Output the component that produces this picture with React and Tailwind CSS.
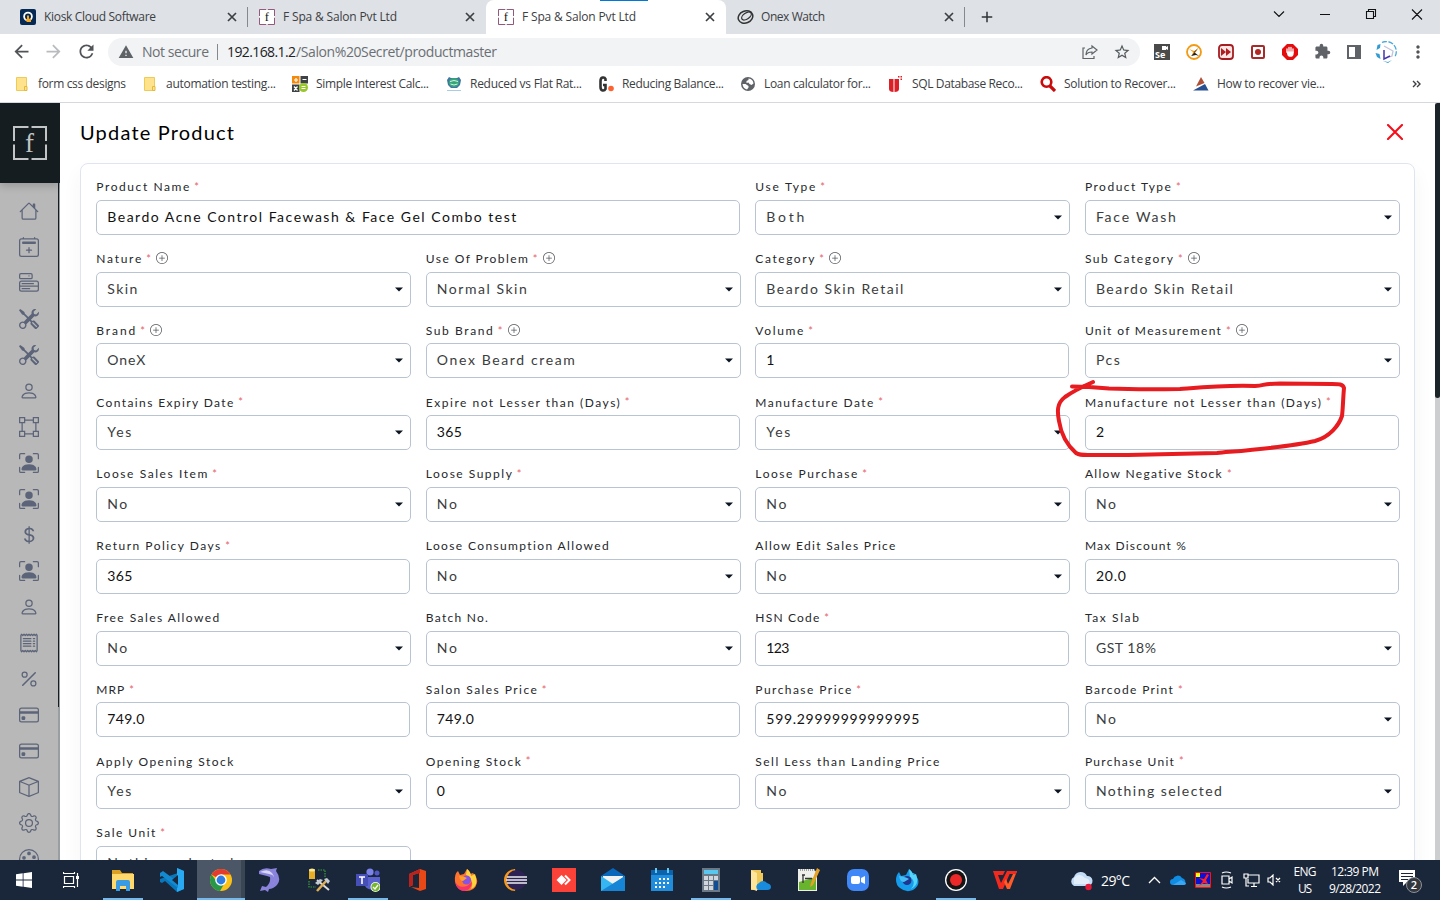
import React, { useLayoutEffect, useRef, useState } from "react";
import {
  BsHouse, BsCalendar2Plus, BsMenuButton, BsTools, BsPerson, BsBoundingBox, BsPersonBoundingBox,
  BsCurrencyDollar, BsReceipt, BsPercent, BsCreditCard, BsBox, BsGear, BsPalette, BsPlusCircle,
} from "react-icons/bs";
import { MdArrowBack, MdArrowForward, MdRefresh, MdWarning, MdStarBorder, MdExtension, MdMoreVert, MdAdd } from "react-icons/md";

// Text that spreads its letters to fill a given width.
function Fit({ w, className = "", children }) {
  const ref = useRef(null);
  const [ls, setLs] = useState(0);
  const text = String(children);
  useLayoutEffect(() => {
    const measure = () => {
      if (!w || text.length < 2 || !ref.current) return;
      const el = ref.current;
      el.style.letterSpacing = "0px";
      const value = (w - el.getBoundingClientRect().width) / (text.length - 1);
      el.style.letterSpacing = value + "px";
      setLs(value);
    };
    measure();
    if (document.fonts && document.fonts.ready) document.fonts.ready.then(measure);
  }, [w, text]);
  return (
    <span className={"block shrink-0 whitespace-nowrap " + className} style={w ? { width: w } : undefined}>
      <span ref={ref} className="inline-block whitespace-nowrap" style={{ letterSpacing: ls }}>{text}</span>
    </span>
  );
}

function FramedF({ size, frame, letter, fill }) {
  return (
    <svg width={size} height={size} viewBox="0 0 34 34">
      <rect width="34" height="34" fill={fill} />
      <path d="M1 15V1H15.500M18.500 1H33V15M33 18.500V33H18.500M15.500 33H1V18.500" fill="none" stroke={frame} strokeWidth="2" />
      <text x="16.500" y="26" textAnchor="middle" fontFamily="Liberation Serif, serif" fontSize="27" fill={letter}>f</text>
    </svg>
  );
}

const SmallF = () => <FramedF size={16} frame="#8a4a70" letter="#111" fill="#fff" />;

const KioskIcon = () => (
  <svg width="16" height="16" viewBox="0 0 16 16">
    <rect width="16" height="16" rx="2" fill="#062a54" />
    <circle cx="8" cy="7.500" r="3.900" fill="none" stroke="#fff" strokeWidth="1.800" />
    <path d="M7 6.500h2v3l2 .8v2.700H6.800L5.500 10.500 7 10z" fill="#f7a823" />
  </svg>
);

const OnexIcon = () => (
  <svg width="18" height="16" viewBox="0 0 18 16" fill="none" stroke="#333">
    <ellipse cx="8.500" cy="8" rx="7.500" ry="6" transform="rotate(-22 8.500 8)" strokeWidth="1.500" />
    <ellipse cx="9.500" cy="7" rx="5.500" ry="3" transform="rotate(-35 9.500 7)" strokeWidth="1.300" />
  </svg>
);

function Tab({ icon, title, w, active, divider, width, gap }) {
  return (
    <div className={"flex h-[34px] shrink-0 items-center pr-[11px] " + width + (active ? " rounded-t-lg bg-white pl-[12px]" : gap)}>
      <div className="flex w-6 shrink-0 items-center">{icon}</div>
      <Fit w={w} className="text-[12px] text-[#3c4043]">{title}</Fit>
      <svg className="ml-auto shrink-0" width="10" height="10" viewBox="0 0 10 10" stroke="#3c4043" strokeWidth="1.700"><path d="M1 1l8 8M9 1L1 9" /></svg>
      {divider && <div className="-mr-[11px] ml-[10px] h-5 w-px shrink-0 bg-[#85888c]" />}
    </div>
  );
}

function TabStrip() {
  return (
    <div className="flex h-[34px] bg-[#dee1e6]">
      <Tab width="w-[248px]" gap=" pl-5" icon={<KioskIcon />} title="Kiosk Cloud Software" w={112} divider />
      <Tab width="w-[238px]" gap=" pl-[11px]" icon={<SmallF />} title="F Spa & Salon Pvt Ltd" w={114} />
      <Tab width="w-[240px]" gap="" icon={<SmallF />} title="F Spa & Salon Pvt Ltd" w={114} active />
      <Tab width="w-[239px]" gap=" pl-[11px]" icon={<OnexIcon />} title="Onex Watch" w={64} divider />
      <MdAdd className="mt-2 ml-[13px] shrink-0 text-[#303336]" size={18} />
      <svg className="ml-auto mt-[6px] shrink-0" width="174" height="18" viewBox="0 0 174 18" fill="none" stroke="#111" strokeWidth="1.100">
        <path d="M8 5.500l5 5 5-5M54 8.500h10M100.500 5.500h7v7h-7zM102.500 5.500v-2h7v7h-2M146 3.500l10 10M156 3.500l-10 10" />
      </svg>
    </div>
  );
}

function Toolbar() {
  return (
    <div className="flex h-[35px] items-center bg-white pl-[11px]">
      <MdArrowBack size={21} className="text-[#505357]" />
      <MdArrowForward size={21} className="ml-[11px] text-[#b9bbbe]" />
      <MdRefresh size={21} className="ml-[12px] text-[#505357]" />
      <div className="ml-[11px] flex h-7 w-[1032px] items-center rounded-full bg-[#f1f3f4] pl-[10px] pr-[9px]">
        <MdWarning size={16} className="text-[#5f6368]" />
        <Fit w={67} className="ml-2 text-[14px] text-[#6b6f74]">Not secure</Fit>
        <div className="ml-2 h-4 w-px bg-[#85888c]" />
        <Fit w={69} className="ml-[9px] text-[14px] text-[#202124]">192.168.1.2</Fit>
        <Fit w={201} className="text-[14px] text-[#6b6f74]">/Salon%20Secret/productmaster</Fit>
        <svg className="ml-auto" width="16" height="16" viewBox="0 0 16 16" fill="none" stroke="#5f6368" strokeWidth="1.200">
          <path d="M3 4H1v10.500h11V12M10 2l5 4-5 4V8C7 8 5 9 4 11c0-4 2-6.500 6-7z" />
        </svg>
        <MdStarBorder size={18} className="ml-[15px] text-[#55595e]" />
      </div>
      <div className="ml-[14px] flex h-4 items-center gap-4">
        <svg width="16" height="16" viewBox="0 0 16 16">
          <rect width="16" height="16" fill="#4a4a4a" />
          <path d="M8 2h4v1l2-1v4l-2-1v1H8z" fill="#fff" />
          <text x="1" y="14" fontFamily="Open Sans, sans-serif" fontSize="9" fontWeight="700" fill="#fff">Se</text>
        </svg>
        <svg width="16" height="16" viewBox="0 0 16 16">
          <circle cx="8" cy="8" r="7" fill="#fff" stroke="#f39a12" strokeWidth="1.800" />
          <path d="M3 5l5 2 4-2-3 4-3 3 1-4z" fill="#f39a12" /><path d="M13 3L8 8l5 4-3-1-5 1 4-4z" fill="#222" />
        </svg>
        <svg width="16" height="16" viewBox="0 0 16 16">
          <rect x="1" y="1" width="14" height="14" rx="3" fill="#fbe6e6" stroke="#a51d20" strokeWidth="1.800" />
          <path d="M3 4l5 4-5 4zM8 4l5 4-5 4z" fill="#b01e22" />
        </svg>
        <svg width="16" height="16" viewBox="0 0 16 16">
          <rect x="2" y="2" width="12" height="12" rx="1" fill="#fff" stroke="#a82a28" strokeWidth="2" />
          <circle cx="8" cy="8" r="3" fill="#b32622" />
        </svg>
        <svg width="16" height="16" viewBox="0 0 16 16">
          <path d="M5 0h6l5 5v6l-5 5H5l-5-5V5z" fill="#e40d0d" />
          <path d="M5 8V5M7 8V3.500M9 8V3.500M11 8.500V5" stroke="#fff" strokeWidth="1.300" strokeLinecap="round" />
          <path d="M4.400 7.500h7.200V10c0 3.500-5 3.500-6 1.500z" fill="#fff" />
        </svg>
        <MdExtension size={17} className="-mr-px text-[#5f6368]" />
        <svg width="16" height="16" viewBox="0 0 16 16"><path d="M1 1h14v14H1zM3 3v10h6V3z" fill="#5f6368" fillRule="evenodd" /></svg>
        <svg className="-ml-[3px]" width="22" height="22" viewBox="0 0 22 22" fill="none">
          <path d="M7 1.500a10 10 0 0 1 13 14" stroke="#49a8dc" strokeWidth="1.300" strokeDasharray="5 1.500" />
          <path d="M2.500 4l3-1-.5 4-3.500 2zM.5 12l4 1 1 5-3.500-2zM8 20l5 1 4-2-4 3z" fill="#319bd4" />
          <path d="M9 5l9 5-1 5-3 1" stroke="#c3c4dd" strokeWidth="1.300" /><path d="M9 9v9l6-3" stroke="#4637ac" strokeWidth="1.500" />
        </svg>
      </div>
      <MdMoreVert size={20} className="ml-[11px] shrink-0 text-[#505357]" />
    </div>
  );
}

const Folder = () => (
  <svg width="16" height="16" viewBox="0 0 16 16">
    <path d="M2.500 1.500h10v13h-10z" fill="#ffe38c" stroke="#edcb58" /><path d="M10.500 10.500h2.500v4h-2.500z" fill="#ffe38c" stroke="#e3ba3e" />
  </svg>
);

const BOOKMARKS = [
  { t: "form css designs", w: 88, cls: "w-[128px]", icon: <Folder /> },
  { t: "automation testing...", w: 110, cls: "w-[150px]", icon: <Folder /> },
  { t: "Simple Interest Calc...", w: 113, cls: "w-[154px]", icon: (
    <svg width="16" height="16" viewBox="0 0 16 16"><path d="M0 0h7.500v7.500H0z" fill="#f48a0b" /><path d="M8.500 0H16v7.500H8.500zM0 8.500h7.500V16H0z" fill="#3f4244" /><circle cx="11.500" cy="11.500" r="4.500" fill="#98c72b" /><path d="M2 4h4M4 2v4M10.500 3.500h4M2 10.500l3.500 4M5.500 10.500L2 14.500M9.500 10.500h4M9.500 12.500h4" stroke="#fff" strokeWidth="1.200" /></svg>) },
  { t: "Reduced vs Flat Rat...", w: 112, cls: "w-[152px]", icon: (
    <svg width="16" height="16" viewBox="0 0 16 16"><path d="M1 4l2-3 2 1h6l2-1 2 3-1 5-3 3H5L2 9z" fill="#4173a6" /><ellipse cx="8" cy="6.500" rx="5.200" ry="4.500" fill="#36a678" /><path d="M4 5.500q4-2 8 0M4.500 8q3.500 2 7 0" fill="none" stroke="#d6f2e3" /><path d="M1 14.500h14" stroke="#a6cde6" /></svg>) },
  { t: "Reducing Balance...", w: 102, cls: "w-[142px]", icon: (
    <svg width="17" height="16" viewBox="0 0 17 16"><path d="M7.500 5V3C6.500.7 2.500.8 2.500 5v6c0 4.500 4 4 5 2V9H5" fill="none" stroke="#333" strokeWidth="2.600" /><circle cx="13" cy="12.500" r="2.800" fill="#ff6231" /></svg>) },
  { t: "Loan calculator for...", w: 107, cls: "w-[148px]", icon: (
    <svg width="16" height="16" viewBox="0 0 16 16"><circle cx="8" cy="8" r="7" fill="#5f6368" /><path d="M8.500 2.500q4.500.5 5 5l-2 1.500-2-1-1-1.500-2 .5V5l2-1zM2.500 8h3l3 2v1.500L7 13.500q-4-1-4.500-5.500z" fill="#fff" /></svg>) },
  { t: "SQL Database Reco...", w: 111, cls: "w-[152px]", icon: (
    <svg width="16" height="16" viewBox="0 0 16 16" fill="#dd2028"><path d="M1 3h4.500v13Q1 16 1 13zM6.500 3H11v10q0 3-4.500 3zM10 0h1.500v1.500H10zM12.500 0H14v1.500h-1.500zM12.500 2.500H14V4h-1.500z" /></svg>) },
  { t: "Solution to Recover...", w: 112, cls: "w-[153px]", icon: (
    <svg width="16" height="16" viewBox="0 0 16 16" fill="none" stroke="#c90b0b"><circle cx="6.500" cy="6" r="4.800" strokeWidth="2.600" /><path d="M10 10l5 5" strokeWidth="3.200" /></svg>) },
  { t: "How to recover vie...", w: 108, cls: "w-[150px]", icon: (
    <svg width="16" height="16" viewBox="0 0 16 16"><path d="M8 1l3.500 6L3 10.500z" fill="#ae5037" /><path d="M0 14.500l12-6.500 3.500 6.500z" fill="#284f8f" /></svg>) },
];

function Bookmarks() {
  return (
    <div className="flex h-[34px] items-center border-b border-[#d5d8dc] bg-white pb-[3px] pl-[14px]">
      {BOOKMARKS.map((b) => (
        <div key={b.t} className={"flex shrink-0 items-center " + b.cls}>
          <div className="flex w-6 shrink-0">{b.icon}</div>
          <Fit w={b.w} className="text-[12px] text-[#3c4043]">{b.t}</Fit>
        </div>
      ))}
      <svg className="ml-[69px]" width="10" height="8" viewBox="0 0 10 8" fill="none" stroke="#3c4043" strokeWidth="1.400"><path d="M1 1l3 3-3 3M5 1l3 3-3 3" /></svg>
    </div>
  );
}

const SIDE = [BsHouse, BsCalendar2Plus, BsMenuButton, BsTools, BsTools, BsPerson, BsBoundingBox, BsPersonBoundingBox,
  BsPersonBoundingBox, BsCurrencyDollar, BsPersonBoundingBox, BsPerson, BsReceipt, BsPercent, BsCreditCard, BsCreditCard, BsBox, BsGear, BsPalette];

function Sidebar() {
  return (
    <div className="flex w-[60px] shrink-0 flex-col overflow-hidden bg-[#b8b8b8]">
      <div className="z-10 flex h-20 shrink-0 items-center justify-center bg-[#161d20] shadow-[0_3px_8px_rgba(0,0,0,0.18)]">
        <FramedF size={34} frame="#c2c4c5" letter="#c2c4c5" fill="#161d20" />
      </div>
      <div className="flex min-h-0 flex-1">
        <div className="flex w-[58px] flex-col items-center pt-[10px]">
          {SIDE.map((Icon, i) => (
            <div key={i} className="flex h-9 shrink-0 items-center justify-center text-[#5c6479]"><Icon size={20} /></div>
          ))}
        </div>
        <div className="w-[2px] bg-[#999ea2]"><div className="h-[524px] w-px bg-[#161d20]" /></div>
      </div>
    </div>
  );
}

const S = "select";
const I = "input";
const FIELDS = [
  ["Product Name", 93, "*", I, "Beardo Acne Control Facewash & Face Gel Combo test", 409, "wide"],
  ["Use Type", 60, "*", S, "Both", 38],
  ["Product Type", 86, "*", S, "Face Wash", 80],
  ["Nature", 45, "*+", S, "Skin", 30],
  ["Use Of Problem", 102, "*+", S, "Normal Skin", 90],
  ["Category", 59, "*+", S, "Beardo Skin Retail", 137],
  ["Sub Category", 88, "*+", S, "Beardo Skin Retail", 137],
  ["Brand", 39, "*+", S, "OneX", 38],
  ["Sub Brand", 67, "*+", S, "Onex Beard cream", 138],
  ["Volume", 48, "*", I, "1", 0],
  ["Unit of Measurement", 136, "*+", S, "Pcs", 24],
  ["Contains Expiry Date", 137, "*", S, "Yes", 24],
  ["Expire not Lesser than (Days)", 194, "*", I, "365", 25],
  ["Manufacture Date", 118, "*", S, "Yes", 24],
  ["Manufacture not Lesser than (Days)", 236, "*", I, "2", 0],
  ["Loose Sales Item", 111, "*", S, "No", 20],
  ["Loose Supply", 86, "*", S, "No", 20],
  ["Loose Purchase", 102, "*", S, "No", 20],
  ["Allow Negative Stock", 137, "*", S, "No", 20],
  ["Return Policy Days", 124, "*", I, "365", 25],
  ["Loose Consumption Allowed", 183, "", S, "No", 20],
  ["Allow Edit Sales Price", 140, "", S, "No", 20],
  ["Max Discount %", 101, "", I, "20.0", 30],
  ["Free Sales Allowed", 123, "", S, "No", 20],
  ["Batch No.", 62, "", S, "No", 20],
  ["HSN Code", 64, "*", I, "123", 23],
  ["Tax Slab", 54, "", S, "GST 18%", 60],
  ["MRP", 28, "*", I, "749.0", 37],
  ["Salon Sales Price", 111, "*", I, "749.0", 37],
  ["Purchase Price", 96, "*", I, "599.29999999999995", 153],
  ["Barcode Print", 88, "*", S, "No", 20],
  ["Apply Opening Stock", 137, "", S, "Yes", 24],
  ["Opening Stock", 95, "*", I, "0", 0],
  ["Sell Less than Landing Price", 184, "", S, "No", 20],
  ["Purchase Unit", 89, "*", S, "Nothing selected", 126],
  ["Sale Unit", 59, "*", S, "Nothing selected", 126],
];

function Field({ label, lw, marks, kind, value, vw, wide }) {
  return (
    <div className={"h-[71.8px] " + (wide ? "col-span-2" : "")}>
      <div className="flex h-[22px] items-center pb-[3px]">
        <Fit w={lw} className="text-[12px] text-[#26282c]">{label}</Fit>
        {marks.includes("*") && <span className="ml-[5px] text-[11px] text-[#e8606b]">*</span>}
        {marks.includes("+") && <BsPlusCircle size={12} className="-mt-[2px] ml-[5px] text-[#55585c]" />}
      </div>
      <div className={"flex h-[35px] items-center justify-between rounded-[5px] border border-[#b9c4d2] bg-white pl-[10px] pr-[7px] text-[14px] " + (kind === I ? "mr-px text-[#111]" : "text-[#3b3d40]")}>
        <Fit w={vw} className="pb-[2px]">{value}</Fit>
        {kind === S && <svg width="8" height="5" viewBox="0 0 8 5"><path d="M0 .5h8L4 4.500z" fill="#0b1420" /></svg>}
      </div>
    </div>
  );
}

function ProductPanel() {
  return (
    <div className="min-w-0 flex-1 overflow-hidden bg-white pl-5 pr-5 font-['Lato',sans-serif]">
      <div className="flex h-[60px] items-center justify-between pb-[2px] pr-3">
        <Fit w={154} className="text-[20px] text-black">Update Product</Fit>
        <svg width="16" height="16" viewBox="0 0 16 16" stroke="#f80d1b" strokeWidth="2.100" strokeLinecap="round"><path d="M1 1l14 14M15 1L1 15" /></svg>
      </div>
      <div className="grid h-[760px] grid-cols-4 content-start gap-x-[14.53px] rounded-lg border border-[#dfe5f0] pl-[15.3px] pr-[14.1px] pt-[13.8px] shadow-[0_10px_20px_rgba(60,60,90,0.05)]">
        {FIELDS.map(([label, lw, marks, kind, value, vw, wide]) => (
          <Field key={label} label={label} lw={lw} marks={marks} kind={kind} value={value} vw={vw} wide={wide} />
        ))}
      </div>
    </div>
  );
}

const svg = (children) => <svg width="24" height="24" viewBox="0 0 24 24">{children}</svg>;

const TASKS = [
  { icon: svg(<><path d="M1 2h8l2 3h11v16H1z" fill="#dba124" /><path d="M1 6h22v15H1z" fill="#ffd96b" /><path d="M5 23v-9q0-2 2-2h10q2 0 2 2v9h-4v-5H9v5z" fill="#399be3" /></>), line: "w-10" },
  { icon: svg(<><path d="M17 0l7 3v18l-7 3L5 13l-3 2-2-1V11l18-6z" fill="#0877bb" /><path d="M17 0l7 3v18l-7 3z" fill="#28a9f2" /><path d="M0 9l2-1 16 12v-6L3 3 0 5z" fill="#1389d1" /><path d="M18 7v10l-6-5z" fill="#1a2639" /></>) },
  { icon: svg(<><circle cx="12" cy="12" r="11" fill="#fbc116" /><path d="M12 12L2.500 6.500A11 11 0 0 1 21.500 6.500H12z" fill="#e33b2e" /><path d="M2.500 6.500A11 11 0 0 0 11 23l5-8.500-4-2.500-4 2z" fill="#279847" /><circle cx="12" cy="12" r="5.800" fill="#fff" /><circle cx="12" cy="12" r="4.400" fill="#2f7de1" /></>), active: true, line: "w-12" },
  { icon: svg(<><path d="M1 3Q6-1 13 1l6-1-1 3q6 8 1 14-4 4-8 4l-1 3-3-2-5 1 2-5 4 1q5-4 4-10L9 8 1 6z" fill="#8983dc" /><path d="M2 4q8-4 12 1 4 5 1 12 4-10-4-11z" fill="#d8d6f5" /></>) },
  { icon: svg(<><path d="M2 2h6v9H2z" fill="#e7af26" /><ellipse cx="5" cy="2" rx="3" ry="1.500" fill="#fce894" /><path d="M11 2h7v7M2 13v6h7" fill="none" stroke="#39a03b" strokeWidth="1.200" strokeDasharray="1.500 1" /><path d="M10 12l12 10" stroke="#ddd" strokeWidth="2" /><path d="M20 12L10 23" stroke="#ddad53" strokeWidth="2.500" /><path d="M8 15l5-4 3 1-5 5zM17 11l3-1 3 3-2 3z" fill="#c4cbd2" /></>) },
  { icon: svg(<><circle cx="14" cy="4" r="3.600" fill="#7b83eb" /><circle cx="21" cy="5" r="2.500" fill="#5059c9" /><path d="M9 9h15v8q0 5-5 5-8 0-10-4z" fill="#5962ce" /><path d="M0 6h12v12H0z" fill="#464eb8" /><path d="M3 9h6M6 9v7" stroke="#fff" strokeWidth="1.600" /><circle cx="19.500" cy="19" r="5" fill="#fff" /><circle cx="19.500" cy="19" r="4.200" fill="#76b82a" /><path d="M17 19l2 2 3-4" fill="none" stroke="#fff" strokeWidth="1.300" /></>), line: "w-10" },
  { icon: svg(<><path d="M15 1l6 2v18l-6 2-9-4 8 1V5L8 7v10l-4 2V6z" fill="#e74816" /><path d="M15 1L4 6v13l4-2V7l7-2z" fill="#bc221d" /></>) },
  { icon: svg(<><path d="M1 14Q0 6 4 3l2 4 4-1 3-5q3 2 3 5l3-1q5 5 4 10-2 8-11 8T1 14z" fill="#ff732f" /><path d="M13 1q4 3 4 7l4-2q4 12-4 15 4-9-5-14z" fill="#ffd43c" /><path d="M1 13q3 8 12 5l5-4q-1 9-9 9-7-2-8-10z" fill="#f8326a" /><circle cx="12.500" cy="12" r="4.500" fill="#8653e5" /><path d="M5 8q5 0 8 2l-4 3q-3 0-4-5z" fill="#ff9e2b" /></>) },
  { icon: svg(<><path d="M12 2A10 10 0 0 0 12 22 11 11 0 0 1 12 2z" fill="#f6991c" stroke="#f6991c" strokeWidth="2" /><circle cx="13.500" cy="12" r="10" fill="#2e2255" /><path d="M4 9h20M3 12h21M4 15h20" stroke="#eee" strokeWidth="1.600" /></>) },
  { icon: svg(<><path d="M0 0h24v24H0z" fill="#fb4238" /><path d="M9.500 7l5 5-5 5-5-5z" fill="#fff" /><path d="M13 7.500l4.500 4.500-4.500 4.500" fill="none" stroke="#fff" strokeWidth="2" /></>) },
  { icon: svg(<><path d="M0 8l12-8 12 8v15H0z" fill="#0867bb" /><path d="M2 8h20v10H2z" fill="#f1f1f1" /><path d="M0 8l12 8 12-8v15H0z" fill="#35b5f2" /><path d="M0 23L24 8v15z" fill="#1685d6" /></>) },
  { icon: svg(<><path d="M1 2h22v21H1z" fill="#208cdc" /><path d="M1 2h22v5H1z" fill="#0c63ab" /><path d="M6 0v5M18 0v5" stroke="#61c8f3" strokeWidth="2" /><path d="M9 11h11M5 15h15M5 19h11" stroke="#fff" strokeWidth="2" strokeDasharray="2 2" /></>) },
  { icon: svg(<><path d="M3 0h18v24H3z" fill="#6b7886" /><path d="M5 2h14v4H5z" fill="#58c8ee" /><path d="M5 8h4v4H5zM10 8h4v4h-4zM15 8h4v4h-4zM5 13h4v4H5zM10 13h4v4h-4zM5 18h4v4H5zM10 18h4v4h-4z" fill="#d0d6dc" /><path d="M15 13h4v9h-4z" fill="#124c92" /></>), line: "w-10" },
  { icon: svg(<><path d="M3 2h10v3h2v17H3z" fill="#f0c85a" /><path d="M3 2l6 3v18l-6-2z" fill="#ffe49b" /><path d="M10 22a4 4 0 0 1 1-7 5 5 0 0 1 8 0q4 1 4 4t-4 3z" fill="#198bdc" /></>) },
  { icon: svg(<><path d="M1 1h16l3 4v18H1z" fill="#eeeeea" /><path d="M2 14l17-5v13H2z" fill="#68b42d" /><path d="M3 2h15" stroke="#555" strokeDasharray="1 1" /><path d="M5 7h3M6 7v8M8 10.500h7" stroke="#333" strokeWidth="1.300" /><path d="M20 0l3 2-7 15-3 2 1-4z" fill="#e5a229" /></>) },
  { icon: svg(<><rect x="1" y="1" width="22" height="22" rx="7" fill="#4087f8" /><rect x="5" y="8" width="9" height="8" rx="2" fill="#fff" /><path d="M15 10l4-2v8l-4-2z" fill="#fff" /></>) },
  { icon: svg(<><path d="M1 12Q1 7 4 4l2 4 5-1 3-6 2 4 3 0 4 6q2 7-5 11-7 3-13-2-4-3-4-8z" fill="#159cec" /><path d="M14 1q4 3 4 6l3-1q4 11-5 15 6-7-1-12z" fill="#55d4f8" /><circle cx="12" cy="12.500" r="4.500" fill="#20358f" /><path d="M4 8q7 1 10 3l-5 3q-4 0-5-6z" fill="#47bdf5" /></>) },
  { icon: svg(<><circle cx="12" cy="12" r="11" fill="#fff" /><circle cx="12" cy="12" r="9.700" fill="#151515" /><circle cx="12" cy="12" r="6" fill="#eb2929" /></>), line: "w-10" },
  { icon: svg(<><path d="M0 3h12l-2 4H5l3 8 6-12h4l-8 18H6z" fill="#f4291e" /><path d="M11 14l3 7h3l7-18h-5l1 3-5 10-2-5z" fill="#ff5a28" /><path d="M16 3h8l-1 3h-8z" fill="#f4291e" /></>) },
];

function Taskbar() {
  return (
    <div className="flex h-10 items-stretch bg-[#1a2639] text-white">
      <div className="flex w-12 shrink-0 items-center justify-center">
        <svg width="16" height="16" viewBox="0 0 16 16" fill="#fff"><path d="M0 2.300l6.700-1v6.300H0zM7.500 1.200L16 0v7.600H7.500zM0 8.400h6.700v6.300L0 13.700zM7.500 8.400H16V16l-8.500-1.200z" /></svg>
      </div>
      <div className="mr-[3px] flex w-[47px] shrink-0 items-center justify-center">
        <svg width="17" height="16" viewBox="0 0 17 16" fill="none" stroke="#fff" strokeWidth="1.200"><path d="M1.500 4.500h9v7h-9zM.5 0v1.500h11V0M.5 16v-1.500h11V16M14.500 1v14" /><path d="M13 4h3v3h-3z" fill="#fff" stroke="none" /></svg>
      </div>
      {TASKS.map((t, i) => (
        <div key={i} className="flex w-[49px] shrink-0 flex-col items-center">
          <div className={"flex w-12 items-center justify-center pt-[2px] " + (t.line ? "h-[38px] " : "h-[38px] ") + (t.active ? "border-r-4 border-[#3b4655] bg-[#4b5666] pl-1" : "")}>{t.icon}</div>
          {t.line && <div className={"h-[2px] bg-[#76b9ed] " + t.line} />}
        </div>
      ))}
      <div className="ml-[40px] flex shrink-0 items-center">
        <svg width="24" height="22" viewBox="0 0 24 22"><path d="M5 17a5 5 0 0 1 0-9 7 7 0 0 1 13-1 5 5 0 0 1 1 10z" fill="#c2dcf6" /><path d="M5 9q5-6 11 0 6 1 4 6H5z" fill="#e2effb" /><circle cx="19.500" cy="18" r="3.200" fill="#e31b3a" /></svg>
        <Fit w={29} className="ml-[8px] text-[14px]">29°C</Fit>
        <svg className="ml-[18px]" width="13" height="8" viewBox="0 0 13 8" fill="none" stroke="#fff" strokeWidth="1.300"><path d="M1 7l5.500-5.500L12 7" /></svg>
        <svg className="ml-[9px]" width="17" height="12" viewBox="0 0 17 12"><path d="M3 11a3 3 0 0 1 0-6 5 5 0 0 1 9-1 4 4 0 0 1 2 7z" fill="#118ce3" /><path d="M3 11l8-5 5 3q0 2-2 2z" fill="#38a8f4" /></svg>
        <svg className="ml-[8px]" width="16" height="16" viewBox="0 0 16 16"><path d="M.5.500h15v15H.5z" fill="#0c12d3" stroke="#f11" /><path d="M1 1h4v4H1z" fill="#ff0" /><path d="M1 12h14v3H1z" fill="#888" /><path d="M12 2l-3 5-5-1 4 3-4 5 5-3 4 1-2-4 3-5z" fill="#f22" /></svg>
        <svg className="ml-[9px]" width="14" height="18" viewBox="0 0 14 18" fill="none" stroke="#fff" strokeWidth="1.200"><path d="M2 5h7v8H2zM9 8l3-2v6l-3-2M2 2q4-2 9 0M2 16q4 2 9 0" /></svg>
        <svg className="ml-[9px]" width="17" height="15" viewBox="0 0 17 15" fill="none" stroke="#fff" strokeWidth="1.200"><path d="M5 2h11v8H5V6M8 13.500h6M11 10v3M1 1h4v4H1zM3 5v8h3" /></svg>
        <svg className="ml-[7px]" width="15" height="12" viewBox="0 0 15 12" fill="none" stroke="#fff" strokeWidth="1.200"><path d="M1 4h2l3-3v10L3 8H1zM9 4l4 4M13 4L9 8" /></svg>
        <div className="ml-[11px] flex w-[24px] flex-col items-center text-[12px] leading-[17px]"><Fit w={23}>ENG</Fit><Fit w={14}>US</Fit></div>
        <div className="ml-[11px] flex w-[54px] flex-col items-center text-[12px] leading-[17px]"><Fit w={48}>12:39 PM</Fit><Fit w={52}>9/28/2022</Fit></div>
        <svg className="ml-[16px] mt-1" width="26" height="26" viewBox="0 0 26 26"><path d="M1 1h16v12H9l-4 4v-4H1z" fill="#fff" /><path d="M3 4.500h12M3 7.500h12M3 10.500h7" stroke="#1a2639" /><circle cx="16" cy="16" r="7.500" fill="#33383f" stroke="#8d9299" /><text x="16" y="20" textAnchor="middle" fontFamily="Open Sans, sans-serif" fontSize="11" fontWeight="600" fill="#fff">2</text></svg>
      </div>
    </div>
  );
}

export default function App() {
  return (
    <div className="relative flex h-[900px] w-[1440px] flex-col overflow-hidden bg-white font-['Open_Sans',sans-serif]">
      <TabStrip />
      <Toolbar />
      <Bookmarks />
      <div className="flex h-[757px] shrink-0 overflow-hidden">
        <Sidebar />
        <ProductPanel />
        <div className="w-[5px] shrink-0 bg-[#cdced0]"><div className="h-[295px] rounded-b-full rounded-tl-full bg-[#1b2428]" /></div>
      </div>
      <Taskbar />
      <div className="absolute left-[600px] top-0 h-px w-12 bg-[#0078d7]" />
      <svg className="pointer-events-none absolute left-[1050px] top-[375px]" width="305" height="90" viewBox="1050 375 305 90" fill="none" stroke="#e71c20" strokeWidth="4" strokeLinecap="round" strokeLinejoin="round">
        <path d="M1093 382C1084 386 1072 392 1065 397C1057 403 1057 411 1059 421C1061 434 1067 445 1076 453C1079 455 1081 455 1088 455L1128 455L1217 453C1250 450 1290 447 1315 441C1330 437 1339 425 1342 416C1343 408 1343 399 1344 388C1343 384 1339 384 1332 384L1280 383.500C1260 384 1267 385 1255 386C1225 385 1205 387 1180 389C1155 389.500 1120 389 1109 388.500L1089 387L1072 386.500" />
      </svg>
    </div>
  );
}
